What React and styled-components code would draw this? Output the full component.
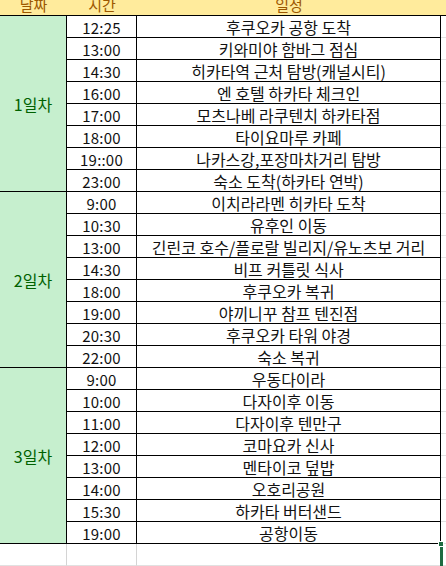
import React from 'react';
import styled, { createGlobalStyle } from 'styled-components';

const GlobalStyle = createGlobalStyle`
  html, body {
    margin: 0;
    padding: 0;
    background: #ffffff;
    overflow: hidden;
  }
  body {
    font-family: "Noto Sans CJK KR", "Noto Sans", sans-serif;
  }
`;

const days = [
  {
    label: '1일차',
    items: [
      ['12:25', '후쿠오카 공항 도착'],
      ['13:00', '키와미야 함바그 점심'],
      ['14:30', '히카타역 근처 탐방(캐널시티)'],
      ['16:00', '엔 호텔 하카타 체크인'],
      ['17:00', '모츠나베 라쿠텐치 하카타점'],
      ['18:00', '타이요마루 카페'],
      ['19::00', '나카스강,포장마차거리 탐방'],
      ['23:00', '숙소 도착(하카타 연박)'],
    ],
  },
  {
    label: '2일차',
    items: [
      ['9:00', '이치라라멘 히카타 도착'],
      ['10:30', '유후인 이동'],
      ['13:00', '긴린코 호수/플로랄 빌리지/유노츠보 거리'],
      ['14:30', '비프 커틀릿 식사'],
      ['18:00', '후쿠오카 복귀'],
      ['19:00', '야끼니꾸 참프 텐진점'],
      ['20:30', '후쿠오카 타워 야경'],
      ['22:00', '숙소 복귀'],
    ],
  },
  {
    label: '3일차',
    items: [
      ['9:00', '우동다이라'],
      ['10:00', '다자이후 이동'],
      ['11:00', '다자이후 텐만구'],
      ['12:00', '코마요카 신사'],
      ['13:00', '멘타이코 덮밥'],
      ['14:00', '오호리공원'],
      ['15:30', '하카타 버터샌드'],
      ['19:00', '공항이동'],
    ],
  },
];

const Sheet = styled.div`
  position: relative;
  width: 446px;
  height: 566px;
  overflow: hidden;
  font-size: 16px;
  color: #111;
`;

const Grid = styled.div`
  display: grid;
  grid-template-columns: 67px 70px 304px 1fr;
  grid-auto-rows: 22px;
  margin-top: -6px;
`;

const HeadCell = styled.div`
  background: #ffeb9c;
  color: #9c5700;
  border-bottom: 1px solid #000;
  display: flex;
  align-items: center;
  justify-content: center;
  box-sizing: border-box;
  font-size: 15px;
  line-height: 1;
`;

const DayCell = styled.div`
  grid-row: span 8;
  background: #c6efce;
  color: #006100;
  border-right: 1px solid #000;
  border-bottom: 1px solid #000;
  box-sizing: border-box;
  display: flex;
  align-items: center;
  justify-content: center;
  font-size: 16px;
`;

const Cell = styled.div`
  box-sizing: border-box;
  border-right: 1px solid #000;
  border-bottom: 1px solid #000;
  display: flex;
  align-items: center;
  justify-content: center;
  white-space: nowrap;
  line-height: 1;
  padding-top: 1px;
  font-size: ${p => (p.$time ? '15px' : '16px')};
  letter-spacing: ${p => (p.$time ? '0.2px' : '0')};
`;

const Blank = styled.div`
  box-sizing: border-box;
  border-bottom: 1px solid #e1e1e1;
  border-right: ${p => (p.$line ? '1px solid #d4d4d4' : 'none')};
`;

const Selection = styled.div`
  position: absolute;
  left: 440px;
  top: 543px;
  width: 3px;
  height: 30px;
  background: #1e6b41;
  &::before {
    content: '';
    position: absolute;
    left: -2px;
    top: -2px;
    width: 6px;
    height: 6px;
    background: #1e6b41;
    border: 1px solid #fff;
    box-sizing: border-box;
  }
`;

export default function App() {
  return (
    <Sheet>
      <GlobalStyle />
      <Grid>
        <HeadCell>날짜</HeadCell>
        <HeadCell>시간</HeadCell>
        <HeadCell>일정</HeadCell>
        <HeadCell />
        {days.map(day => (
          <React.Fragment key={day.label}>
            {day.items.map(([time, plan], i) => (
              <React.Fragment key={time + plan}>
                {i === 0 && <DayCell>{day.label}</DayCell>}
                <Cell $time>{time}</Cell>
                <Cell>{plan}</Cell>
                <Blank />
              </React.Fragment>
            ))}
          </React.Fragment>
        ))}
        <Blank $line />
        <Blank $line />
        <Blank />
        <Blank />
      </Grid>
      <Selection />
    </Sheet>
  );
}
